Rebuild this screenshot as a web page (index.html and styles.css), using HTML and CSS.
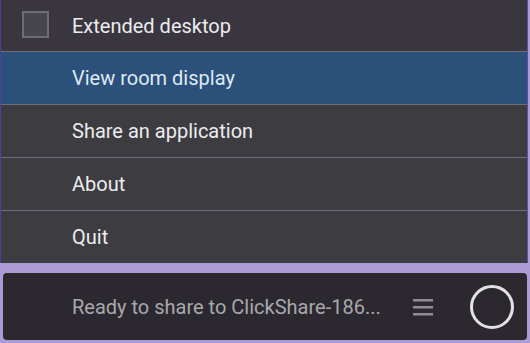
FILE: index.html
```html
<!DOCTYPE html>
<html lang="en">
<head>
    <meta charset="UTF-8">
    <meta name="viewport" content="width=device-width, initial-scale=1.0">
    <title>ClickShare</title>
    <link rel="stylesheet" href="styles.css">
</head>
<body>
    <div class="menu">
        <div class="menu-item menu-item-first">
            <span class="check"></span>
            <span class="label">Extended desktop</span>
        </div>
        <div class="menu-item active">
            <span class="label">View room display</span>
        </div>
        <div class="menu-item">
            <span class="label">Share an application</span>
        </div>
        <div class="menu-item">
            <span class="label">About</span>
        </div>
        <div class="menu-item">
            <span class="label">Quit</span>
        </div>
    </div>

    <div class="status-bar">
        <span class="status-text">Ready to share to ClickShare-186...</span>
        <svg class="menu-icon" width="20" height="20" viewBox="0 0 20 20">
            <rect x="0" y="2" width="20" height="2.5" fill="#8e8d92"/>
            <rect x="0" y="9" width="20" height="2.5" fill="#8e8d92"/>
            <rect x="0" y="16" width="20" height="2.5" fill="#8e8d92"/>
        </svg>
        <svg class="button-icon" width="46" height="46" viewBox="0 0 46 46">
            <circle cx="23" cy="23" r="20.5" fill="none" stroke="#e2e1e4" stroke-width="3"/>
        </svg>
    </div>
</body>
</html>
```

FILE: styles.css
```css
body {
    margin: 0;
    padding: 0;
    background-color: #ab9bd5;
    font-family: Roboto, "Liberation Sans", sans-serif;
}

.menu {
    width: 526px;
    background-color: #3d3c40;
    border-right: 1px solid #5b4fa6;
    border-left: 1px solid #4f3f9a;
}

.menu-item {
    display: flex;
    align-items: center;
    height: 52px;
    border-bottom: 1px solid #6f6f78;
    color: #ececee;
    font-size: 20px;
}

.menu-item:last-child {
    border-bottom: none;
}

.menu-item-first {
    height: 51px;
    background-color: #3a3640;
}

.menu-item.active {
    background-color: #2b5079;
    color: #dfe9f4;
}

.check {
    width: 23px;
    height: 23px;
    margin-left: 21px;
    margin-right: 23px;
    margin-top: -2px;
    border: 2px solid #6e6d74;
    background-color: #47464d;
}

.label {
    margin-left: 71px;
}

.check + .label {
    margin-left: 0;
}

.status-bar {
    display: flex;
    align-items: center;
    height: 67px;
    margin: 10px 3px 0 3px;
    background-color: #2b292f;
    border-radius: 4px;
}

.status-text {
    margin-left: 69px;
    color: #a9a8ad;
    font-size: 20px;
}

.menu-icon {
    margin-left: 32px;
}

.button-icon {
    margin-left: 36px;
}
```
